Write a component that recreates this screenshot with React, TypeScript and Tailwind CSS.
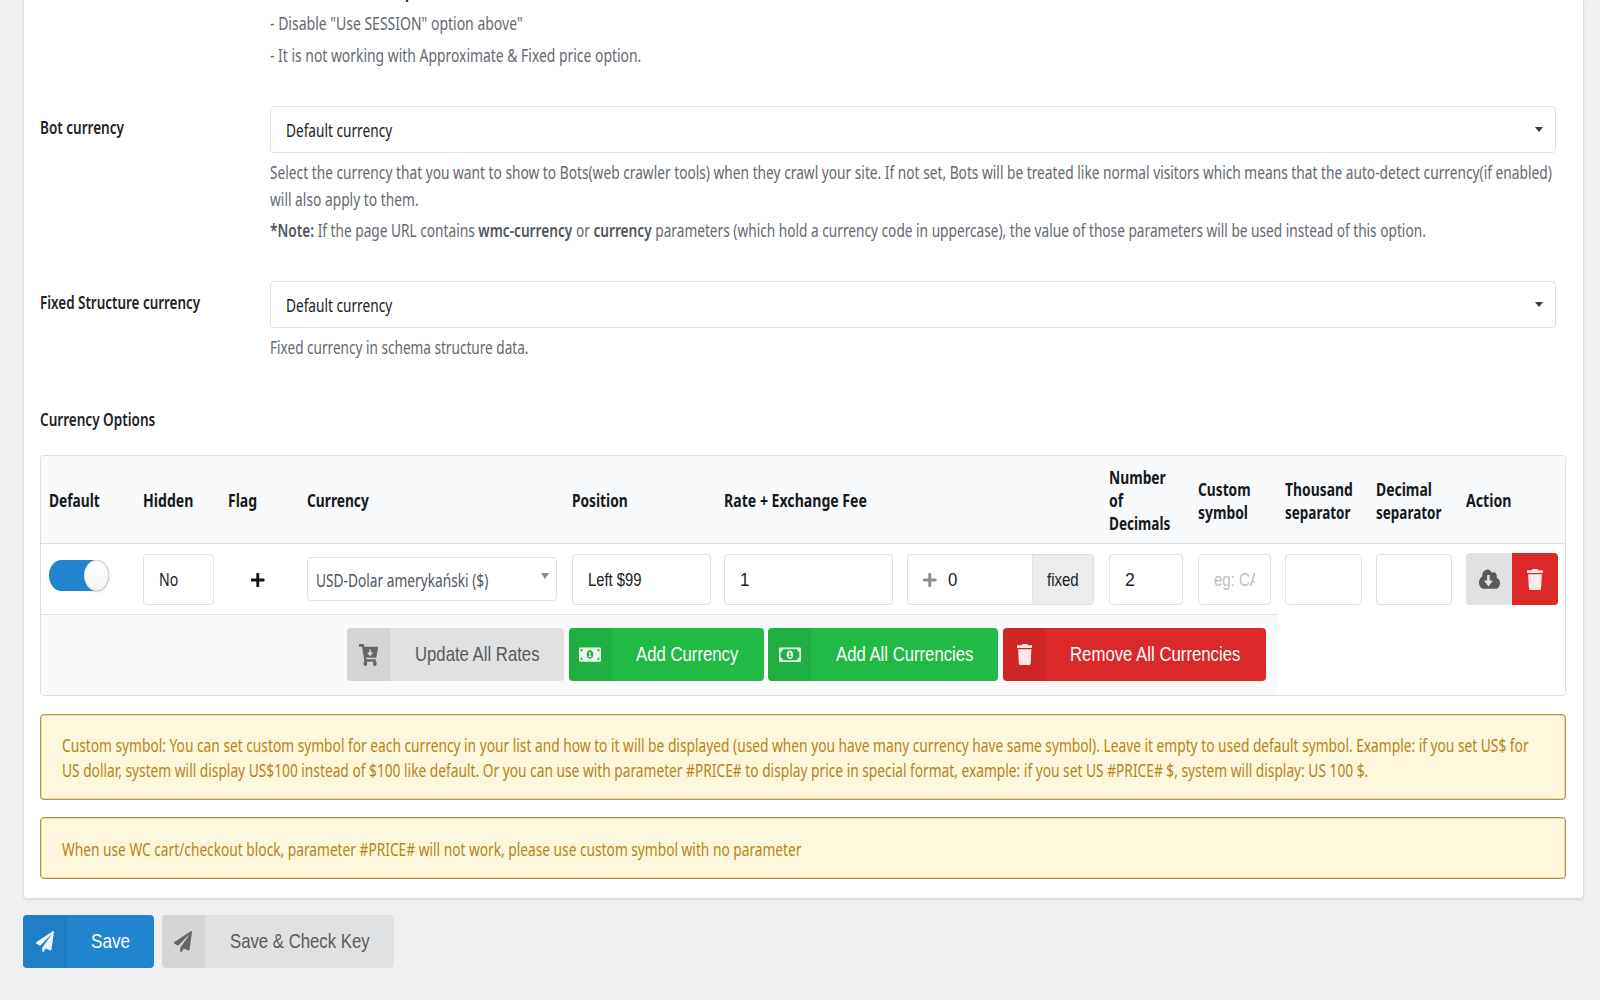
import { useLayoutEffect, useRef, useState, type ReactNode } from "react";
import type { IconType } from "react-icons";
import {
  FaCartArrowDown,
  FaCloudDownloadAlt,
  FaMoneyBillAlt,
  FaPaperPlane,
  FaPlus,
  FaRegMoneyBillAlt,
  FaTrash,
} from "react-icons/fa";

/** One line of condensed text, scaled horizontally so that it is `w` pixels wide. */
function Fit({ w, className = "", children }: { w: number; className?: string; children: ReactNode }) {
  const ref = useRef<HTMLSpanElement>(null);
  const [scale, setScale] = useState(1);
  useLayoutEffect(() => {
    if (ref.current) setScale((w + 0.6) / ref.current.offsetWidth);
  }, [w]);
  return (
    <div className={`shrink-0 whitespace-nowrap ${className}`} style={{ width: w }}>
      <span ref={ref} className="-ml-[0.3px] inline-block origin-left" style={{ transform: `scaleX(${scale})` }}>
        {children}
      </span>
    </div>
  );
}

function Caret({ className }: { className: string }) {
  return (
    <svg viewBox="0 0 8 5" preserveAspectRatio="none" className={className} fill="currentColor">
      <path d="M0 0h8L4 5z" />
    </svg>
  );
}

function Dropdown() {
  return (
    <div className="flex h-[47px] w-[1286px] items-center justify-between rounded-[4px] border border-[#dfe0e1] pr-3 pl-[15px]">
      <Fit w={105.5} className="text-[#202124]">Default currency</Fit>
      <Caret className="mb-px h-[5px] w-[8px] text-[#3a3a3a]" />
    </div>
  );
}

function Field({ className, children }: { className: string; children?: ReactNode }) {
  return (
    <div
      className={`mt-[10px] flex h-[51px] items-center rounded-[4px] border border-[#dfe0e1] pl-[15px] font-['Liberation_Sans',sans-serif] text-[18.5px] text-[#202124] ${className}`}
    >
      {children}
    </div>
  );
}

function IconButton({
  icon: Icon,
  label,
  textW,
  color,
  width,
  stripW,
  textGap,
  iconSize,
}: {
  icon: IconType;
  label: string;
  textW: number;
  color: string;
  width: string;
  stripW: string;
  textGap: string;
  iconSize: string;
}) {
  return (
    <div className={`flex h-[53px] shrink-0 items-center overflow-hidden rounded-[4px] font-['Liberation_Sans',sans-serif] text-[20.4px] ${color} ${width}`}>
      <div className={`flex h-full shrink-0 items-center justify-center bg-black/5 ${stripW}`}>
        <Icon preserveAspectRatio="none" className={`opacity-90 ${iconSize}`} />
      </div>
      <Fit w={textW} className={`mb-0.5 ${textGap}`}>{label}</Fit>
    </div>
  );
}

const GREY = "bg-[#e0e1e2] text-[#5a5a5a]";
const GREEN = "bg-[#21ba45] text-white";
const RED = "bg-[#db2828] text-white";
const BLUE = "bg-[#2185d0] text-white";

const COLS = "grid grid-cols-[94px_85px_79px_265px_152px_385px_89px_87px_91px_90px_92px] pl-2";

const HEADERS: [string, number][][] = [
  [["Default", 50.5]],
  [["Hidden", 49.5]],
  [["Flag", 28.5]],
  [["Currency", 61]],
  [["Position", 55]],
  [["Rate + Exchange Fee", 142]],
  [["Number", 56], ["of", 14], ["Decimals", 61]],
  [["Custom", 52], ["symbol", 49.5]],
  [["Thousand", 67], ["separator", 65]],
  [["Decimal", 55], ["separator", 65]],
  [["Action", 45]],
];

export default function App() {
  return (
    <div className="h-[1000px] w-[1600px] overflow-hidden bg-[#efefef] font-['Noto_Sans',sans-serif] text-[18.3px] leading-[26px] text-[#646970]">
      <div className="ml-[23px] flex h-[899px] w-[1561px] flex-col rounded-b-[4px] border border-t-0 border-[#dcdddd] bg-white px-4 shadow-[0_1px_2px_0_rgba(34,36,38,0.08)]">
        <div className="ml-[230px] flex flex-col">
          <div className="-mt-[22px] ml-[134.5px] h-[26px] font-medium text-[#202124]">p</div>
          <Fit w={252} className="mt-[6px]">- Disable "Use SESSION" option above"</Fit>
          <Fit w={370.5} className="mt-[6px]">- It is not working with Approximate &amp; Fixed price option.</Fit>
        </div>

        <div className="mt-[38px] flex">
          <div className="w-[230px] shrink-0 pt-2">
            <Fit w={83} className="ml-[0.5px] font-semibold text-[#1d2327]">Bot currency</Fit>
          </div>
          <div>
            <Dropdown />
            <Fit w={1281} className="mt-[6px]">
              Select the currency that you want to show to Bots(web crawler tools) when they crawl your site. If not set,
              Bots will be treated like normal visitors which means that the auto-detect currency(if enabled)
            </Fit>
            <Fit w={148} className="mt-px">will also apply to them.</Fit>
            <Fit w={1155} className="mt-[5px]">
              <b className="font-semibold text-[#50575e]">*Note:</b> If the page URL contains{" "}
              <b className="font-semibold text-[#50575e]">wmc-currency</b> or{" "}
              <b className="font-semibold text-[#50575e]">currency</b> parameters (which hold a currency code in
              uppercase), the value of those parameters will be used instead of this option.
            </Fit>
          </div>
        </div>

        <div className="mt-[38px] flex">
          <div className="w-[230px] shrink-0 pt-[8px]">
            <Fit w={159.5} className="ml-[0.5px] font-semibold text-[#1d2327]">Fixed Structure currency</Fit>
          </div>
          <div>
            <Dropdown />
            <Fit w={257.5} className="mt-[6px]">Fixed currency in schema structure data.</Fit>
          </div>
        </div>

        <Fit w={115} className="mt-[46px] ml-[0.5px] font-semibold text-[#1d2327]">Currency Options</Fit>

        <div className="mt-[23px] h-[241px] w-[1526px] shrink-0 overflow-hidden rounded-[4px] border border-[#dcdfe0]">
          <div className={`h-[88px] items-center border-b border-[#dcdfe0] bg-[#f9fafb] leading-[23px] font-bold text-[#15181b] ${COLS}`}>
            {HEADERS.map((lines, i) => (
              <div key={i}>
                {lines.map(([text, w]) => (
                  <Fit key={text} w={w}>{text}</Fit>
                ))}
              </div>
            ))}
          </div>

          <div className={`h-[70px] ${COLS}`}>
            <div className="mt-4 flex h-[31px] w-[60px] justify-end rounded-l-[12.5px_15.5px] rounded-r-[12.5px_15.5px] bg-[#2185d0]">
              <div className="h-[31px] w-[25px] rounded-[50%] bg-linear-to-b from-white to-[#f3f3f3] shadow-[0_1px_2px_0_rgba(34,36,38,0.2),0_0_0_1px_rgba(34,36,38,0.13)_inset]" />
            </div>
            <Field className="w-[71px] pb-[2px] font-['Noto_Sans',sans-serif]">
              <Fit w={18.5}>No</Fit>
            </Field>
            <div className="mt-[28px] pl-[23px] text-[#151515]">
              <FaPlus preserveAspectRatio="none" className="h-4 w-[13.5px]" />
            </div>
            <div className="mt-[13px] flex h-[44px] w-[250px] justify-between rounded-[4px] border border-[#dfe0e1] pt-[9px] pr-[7px] pl-[8.5px] text-[#50575e]">
              <Fit w={172}>USD-Dolar amerykański ($)</Fit>
              <Caret className="mt-[5.5px] h-[6px] w-[8px] text-[#888]" />
            </div>
            <Field className="w-[139px]">
              <Fit w={53}>Left $99</Fit>
            </Field>
            <div className="flex">
              <Field className="w-[169px]">
                <Fit w={8.5}>1</Fit>
              </Field>
              <Field className="ml-[14px] w-[187px] overflow-hidden pl-[12px]">
                <FaPlus preserveAspectRatio="none" className="h-4 w-[13.5px] text-[#8f8f8f]" />
                <Fit w={8.5} className="ml-[12px]">0</Fit>
                <div className="ml-auto flex h-full w-[61px] items-center justify-center border-l border-[#e3e3e3] bg-[#ececec]">
                  <Fit w={31}>fixed</Fit>
                </div>
              </Field>
            </div>
            <Field className="w-[74px]">
              <Fit w={9}>2</Fit>
            </Field>
            <Field className="w-[73px]">
              <div className="w-[41px] overflow-hidden text-[#c0c0c0]">
                <Fit w={56}>eg: CAD</Fit>
              </div>
            </Field>
            <Field className="w-[77px]" />
            <Field className="w-[76px]" />
            <div className="mt-[9px] flex h-[52px] overflow-hidden rounded-[4px]">
              <div className={`flex w-[46px] items-center justify-center ${GREY}`}>
                <FaCloudDownloadAlt preserveAspectRatio="none" className="h-[22px] w-[21px]" />
              </div>
              <div className={`flex w-[46px] items-center justify-center ${RED}`}>
                <FaTrash preserveAspectRatio="none" className="h-[21px] w-[16px] opacity-90" />
              </div>
            </div>
          </div>

          <div className="flex h-[81px] w-[1236px] gap-[4.5px] border-t border-[#dcdfe0] bg-[#f9fafb] pt-[13px] pl-[306px]">
            <IconButton icon={FaCartArrowDown} label="Update All Rates" textW={124} color={GREY} width="w-[217px]" stripW="w-[42.5px]" textGap="ml-[25.5px]" iconSize="h-[22px] w-[19px]" />
            <IconButton icon={FaMoneyBillAlt} label="Add Currency" textW={102} color={GREEN} width="w-[195px]" stripW="w-[43px]" textGap="ml-[25px]" iconSize="h-[19px] w-[22px]" />
            <IconButton icon={FaRegMoneyBillAlt} label="Add All Currencies" textW={137} color={GREEN} width="w-[230px]" stripW="w-[43px]" textGap="ml-[25px]" iconSize="h-[19.5px] w-[22px]" />
            <IconButton icon={FaTrash} label="Remove All Currencies" textW={169.5} color={RED} width="w-[263px]" stripW="w-[43.5px]" textGap="ml-[24.5px]" iconSize="h-[21px] w-[15.5px]" />
          </div>
        </div>

        <div className="mt-[18px] h-[86px] w-[1526px] shrink-0 rounded-[4px] border border-[#b8923c] bg-[#fff7db] pt-[17px] pl-[21.5px] leading-[25px] text-[#b3841a] shadow-[0_0_0_0.5px_#c9ba9b_inset]">
          <Fit w={1466}>
            Custom symbol: You can set custom symbol for each currency in your list and how to it will be displayed (used
            when you have many currency have same symbol). Leave it empty to used default symbol. Example: if you set US$ for
          </Fit>
          <Fit w={1305.5}>
            US dollar, system will display US$100 instead of $100 like default. Or you can use with parameter #PRICE# to
            display price in special format, example: if you set US #PRICE# $, system will display: US 100 $.
          </Fit>
        </div>
        <div className="mt-[17px] h-[62px] w-[1526px] shrink-0 rounded-[4px] border border-[#b8923c] bg-[#fff7db] pt-[18px] pl-[21.5px] leading-[25px] text-[#b3841a] shadow-[0_0_0_0.5px_#c9ba9b_inset]">
          <Fit w={739}>When use WC cart/checkout block, parameter #PRICE# will not work, please use custom symbol with no parameter</Fit>
        </div>
      </div>

      <div className="mt-4 ml-[23px] flex gap-2">
        <IconButton icon={FaPaperPlane} label="Save" textW={38} color={BLUE} width="w-[131px]" stripW="w-[43.5px]" textGap="ml-[24.5px]" iconSize="h-[21px] w-[18px]" />
        <IconButton icon={FaPaperPlane} label="Save & Check Key" textW={139} color={GREY} width="w-[232px]" stripW="w-[42.5px]" textGap="ml-[25.5px]" iconSize="h-[21px] w-[18px]" />
      </div>
    </div>
  );
}
